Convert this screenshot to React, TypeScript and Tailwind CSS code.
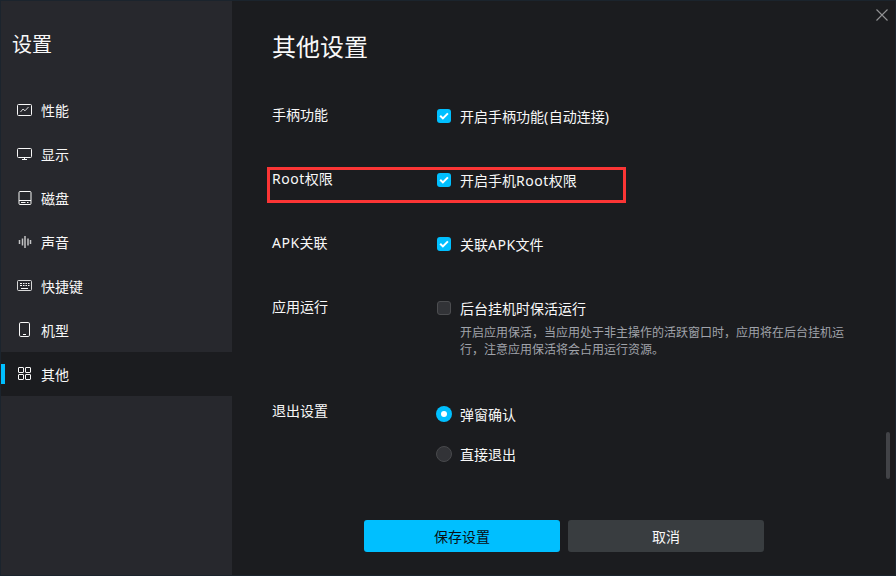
import type { ReactNode } from "react";

const icons: Record<string, ReactNode> = {
  performance: (
    <>
      <rect x="0.5" y="2.5" width="14" height="11" rx="1" />
      <path d="M3.5 10 6 7l2 1.8 3.5-3.8" strokeOpacity="0.85" />
    </>
  ),
  display: (
    <>
      <rect x="0.5" y="2.5" width="14" height="9" rx="1" />
      <path d="M7.5 11.5v2M5 13.5h5" />
    </>
  ),
  disk: (
    <>
      <rect x="2" y="1.5" width="12" height="13" rx="1" />
      <path d="M2 10.5h12M4 12.5h4.5M10 12.5h1.5" />
    </>
  ),
  sound: (
    <path
      d="M2.5 6v4M5.5 4.5v7M8 2v12M11 4.5v7M13.5 6v4"
      strokeOpacity="0.75"
      strokeWidth="1.5"
    />
  ),
  keyboard: (
    <>
      <rect x="0.5" y="2.5" width="14" height="10" rx="1" strokeOpacity="0.85" />
      <path d="M3 5.5h2M6 5.5h1.5M8.5 5.5H10M11 5.5h1.5M3 7.5h2M6 7.5h1.5M8.5 7.5H10M11 7.5h1.5M4 10.5h7" />
    </>
  ),
  phone: (
    <>
      <rect x="2.5" y="0.5" width="10" height="14" rx="1.3" />
      <path d="M6 12.5h3" />
    </>
  ),
  other: (
    <>
      <rect x="1.5" y="1.5" width="5" height="5" rx="0.4" />
      <rect x="8.5" y="1.5" width="5" height="5" rx="0.4" />
      <rect x="1.5" y="8.5" width="5" height="5" rx="0.4" />
      <rect x="8.5" y="8.5" width="5" height="5" rx="0.4" />
    </>
  ),
};

const navItems = [
  { icon: "performance", label: "性能" },
  { icon: "display", label: "显示" },
  { icon: "disk", label: "磁盘" },
  { icon: "sound", label: "声音" },
  { icon: "keyboard", label: "快捷键" },
  { icon: "phone", label: "机型" },
  { icon: "other", label: "其他", active: true },
];

function NavItem({ icon, label, active }: { icon: string; label: string; active?: boolean }) {
  return (
    <div className={`flex h-11 items-center ${active ? "bg-[#1b1c1f]" : ""}`}>
      <div className={`h-5 w-1 ${active ? "bg-[#00bfff]" : ""}`} />
      <svg className="ml-3 size-4 shrink-0" viewBox="0 0 16 16" fill="none" stroke="#f8f8f8">
        {icons[icon]}
      </svg>
      <span className="ml-2 pt-0.5 leading-5">{label}</span>
    </div>
  );
}

/** Gives Latin runs inside Chinese text a little extra letter spacing. */
function MixedText({ text }: { text: string }) {
  return text.split(/([A-Za-z()]+)/).map((part, i) =>
    i % 2 === 1 ? (
      <span key={i} className="tracking-[0.5px]">
        {part}
      </span>
    ) : (
      part
    ),
  );
}

function Checkbox({ checked }: { checked?: boolean }) {
  return checked ? (
    <span className="flex size-3.5 shrink-0 items-center justify-center rounded-[3px] bg-[#00bfff]">
      <svg className="size-3.5" viewBox="0 0 14 14" fill="none" stroke="white" strokeWidth="2">
        <path d="m3.2 6.7 2.7 2.7 5-5" />
      </svg>
    </span>
  ) : (
    <span className="size-3.5 shrink-0 rounded-[3px] border border-[#4c4d50] bg-[#323337]" />
  );
}

function Radio({ checked }: { checked?: boolean }) {
  return checked ? (
    <span className="-ml-px flex size-4 shrink-0 items-center justify-center rounded-full bg-[#00bfff]">
      <span className="size-1.5 rounded-full bg-white" />
    </span>
  ) : (
    <span className="-ml-px size-4 shrink-0 rounded-full border border-[#48494c] bg-[#323337]" />
  );
}

function Option({ control, text, radio }: { control: ReactNode; text: string; radio?: boolean }) {
  return (
    <div className={`flex h-[22px] items-center ${radio ? "gap-2" : "gap-[9px]"}`}>
      {control}
      <span className="pt-0.5 leading-5">
        <MixedText text={text} />
      </span>
    </div>
  );
}

function Row({ label, tall, marked, children }: { label: string; tall?: boolean; marked?: boolean; children: ReactNode }) {
  return (
    <div className={`relative flex items-start ${tall ? "h-[104px]" : "h-16"}`}>
      <span className="w-[165px] shrink-0 leading-5">
        <MixedText text={label} />
      </span>
      <div className="w-[410px]">{children}</div>
      {marked && (
        <div className="absolute -left-[5px] -top-[2px] h-9 w-[359px] border-3 border-[#fb3535]" />
      )}
    </div>
  );
}

export default function App() {
  return (
    <div className="relative flex h-[576px] w-[896px] overflow-hidden border border-[#1b242d] bg-[#1b1c1f] font-['Noto_Sans','Noto_Sans_CJK_SC',sans-serif] text-sm text-[#f8f8f8]">
      <aside className="w-[231px] shrink-0 bg-[#27282d]">
        <h1 className="h-[87px] pl-[11px] pt-[30px] text-xl leading-7">设置</h1>
        <nav>
          {navItems.map((item) => (
            <NavItem key={item.label} {...item} />
          ))}
        </nav>
      </aside>

      <main className="flex-1 pl-10">
        <h2 className="h-[104px] pt-[28px] text-2xl leading-9">其他设置</h2>
        <Row label="手柄功能">
          <Option control={<Checkbox checked />} text="开启手柄功能(自动连接)" />
        </Row>
        <Row label="Root权限" marked>
          <Option control={<Checkbox checked />} text="开启手机Root权限" />
        </Row>
        <Row label="APK关联">
          <Option control={<Checkbox checked />} text="关联APK文件" />
        </Row>
        <Row label="应用运行" tall>
          <Option control={<Checkbox />} text="后台挂机时保活运行" />
          <p className="ml-[23px] w-[386px] pt-[5px] text-xs leading-[17px] text-[#a0a3aa]">
            开启应用保活，当应用处于非主操作的活跃窗口时，应用将在后台挂机运行，注意应用保活将会占用运行资源。
          </p>
        </Row>
        <Row label="退出设置" tall>
          <div className="flex flex-col gap-[18px] pt-0.5">
            <Option radio control={<Radio checked />} text="弹窗确认" />
            <Option radio control={<Radio />} text="直接退出" />
          </div>
        </Row>
        <div className="ml-[92px] mt-[15px] flex gap-2">
          <button className="h-8 w-[196px] rounded-[3px] bg-[#00bfff] pt-0.5 text-[#0a1014]">保存设置</button>
          <button className="h-8 w-[196px] rounded-[3px] bg-[#393d40] pt-0.5">取消</button>
        </div>
      </main>

      <svg
        className="absolute right-[7px] top-2 size-3"
        viewBox="0 0 12 12"
        fill="none"
        stroke="#929395"
        strokeWidth="1.1"
      >
        <path d="m.5.5 11 11M11.5.5l-11 11" />
      </svg>
      <div className="absolute right-[5px] top-[431px] h-[47px] w-1 rounded-full bg-[#424347]" />
    </div>
  );
}
